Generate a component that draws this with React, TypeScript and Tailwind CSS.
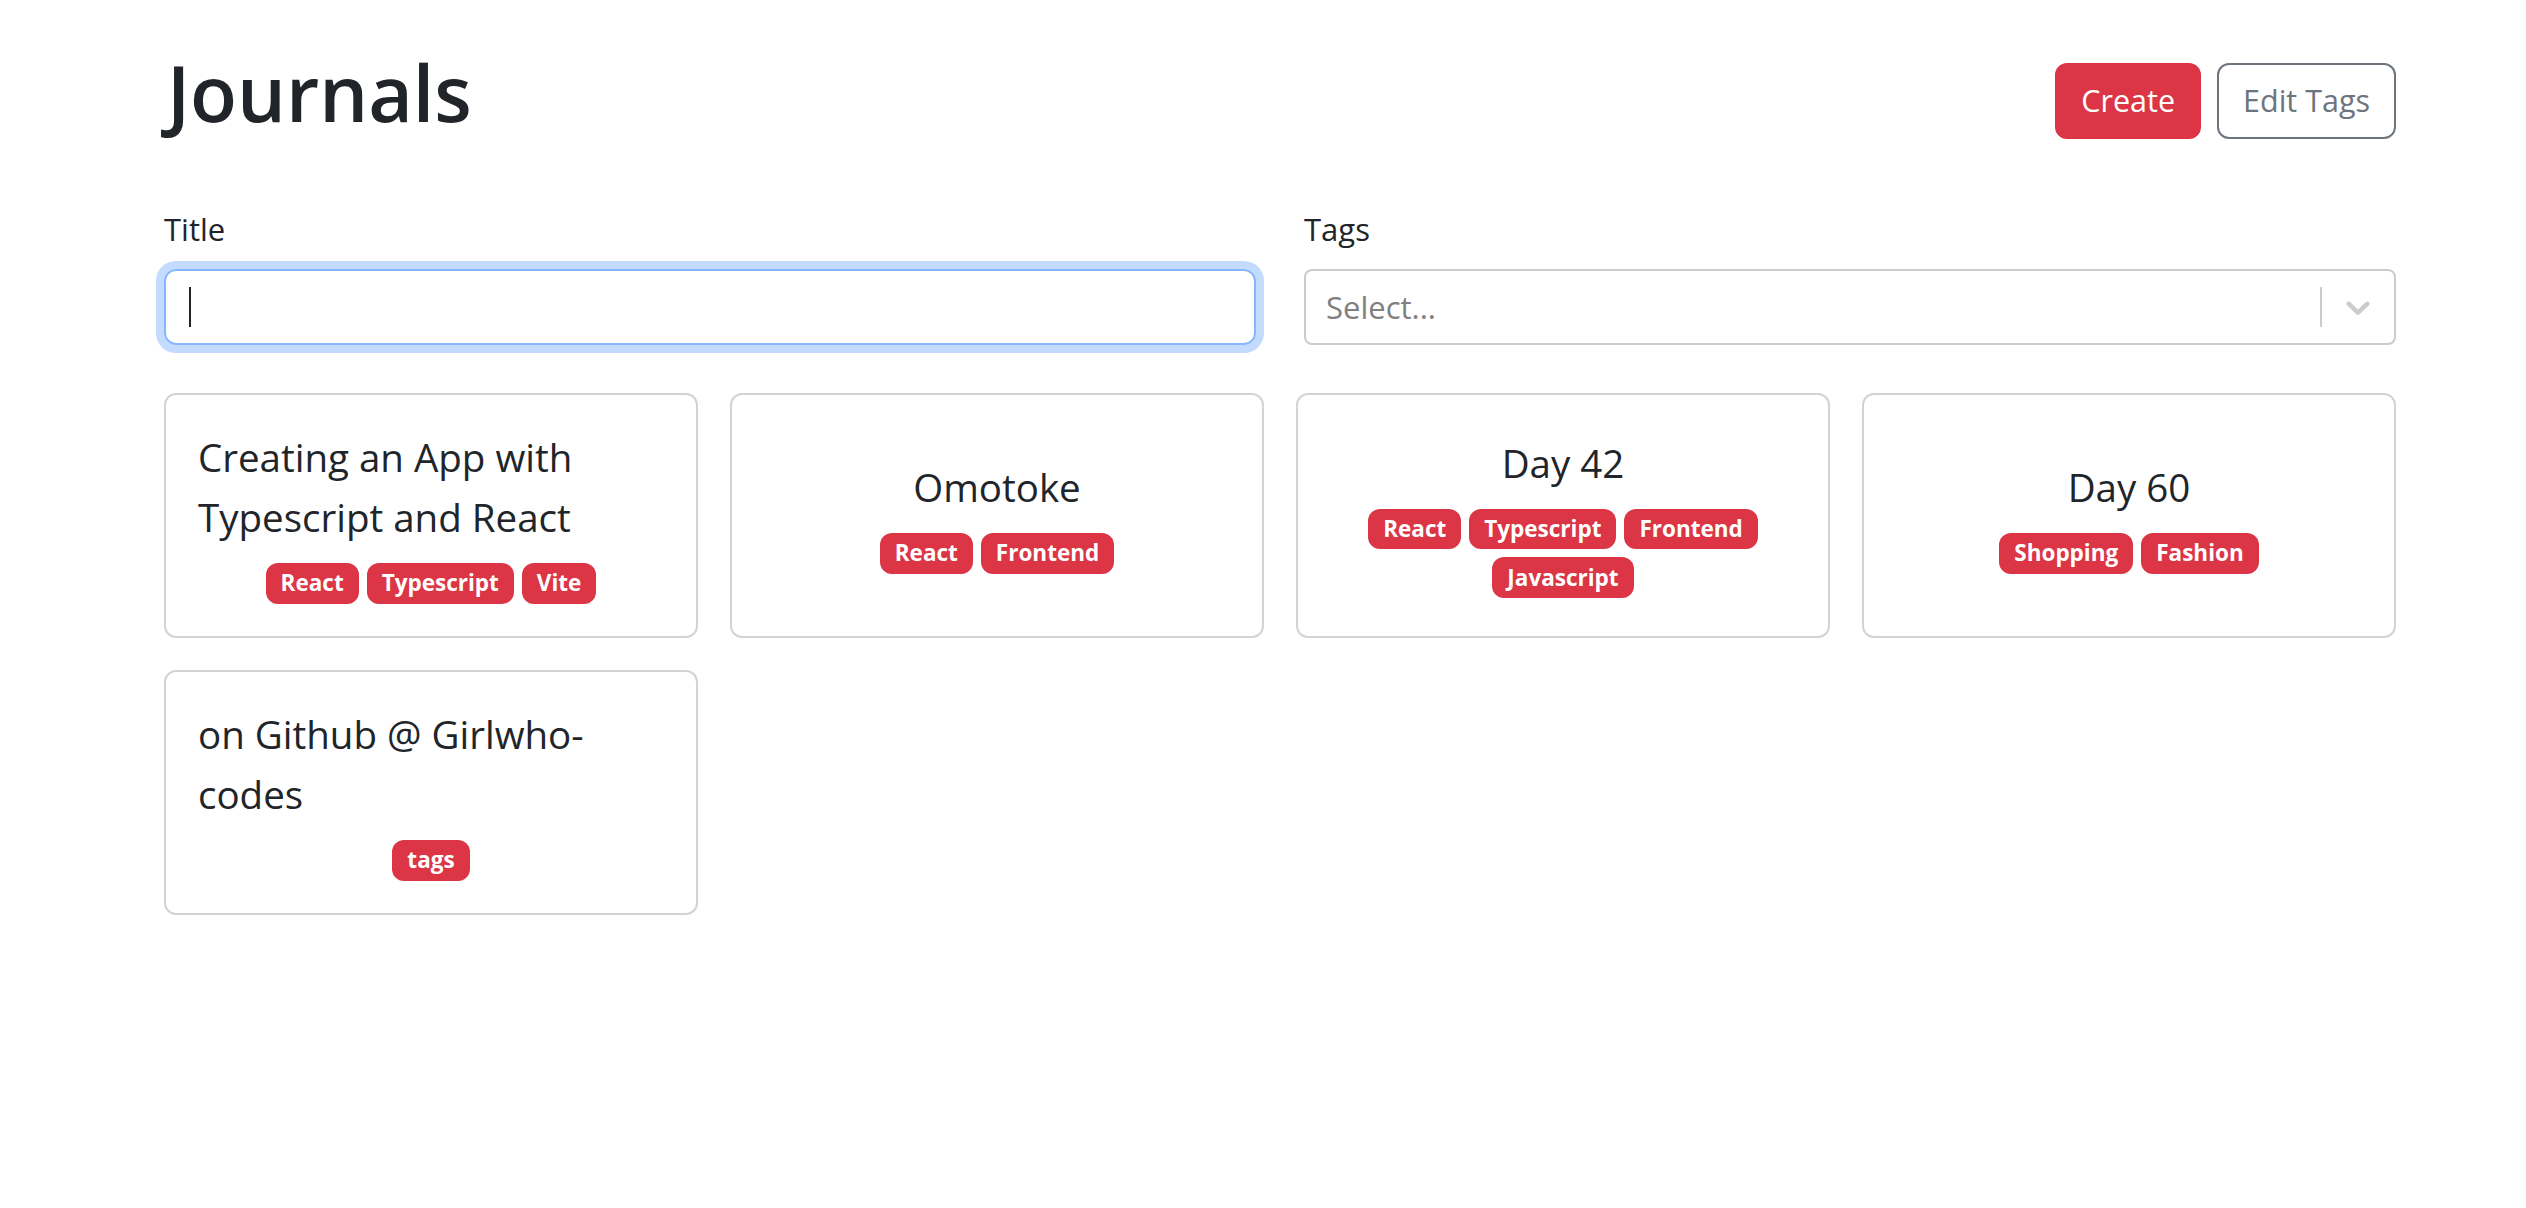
import { useState } from "react";

type Journal = {
    id: string;
    title: string;
    tags: string[];
};

const journals: Journal[] = [
    { id: "1", title: "Creating an App with Typescript and React", tags: ["React", "Typescript", "Vite"] },
    { id: "2", title: "Omotoke", tags: ["React", "Frontend"] },
    { id: "3", title: "Day 42", tags: ["React", "Typescript", "Frontend", "Javascript"] },
    { id: "4", title: "Day 60", tags: ["Shopping", "Fashion"] },
    { id: "5", title: "on Github @ Girlwho-codes", tags: ["tags"] },
];

function JournalCard({ journal }: { journal: Journal }) {
    return (
        <div className="bg-white border-2 border-[#d3d3d3] rounded-[12px] p-[32px] h-full">
            <div className="flex flex-col items-center justify-center gap-[16px] h-full">
                <span className="text-[38.5px] leading-[60px] text-[#212529]">{journal.title}</span>
                <div className="flex flex-wrap justify-center gap-[8px]">
                    {journal.tags.map((tag) => (
                        <span
                            key={tag}
                            className="bg-[#dc3545] text-white font-bold text-[22.5px] leading-none px-[15px] py-[9.2px] rounded-[12px]"
                        >
                            {tag}
                        </span>
                    ))}
                </div>
            </div>
        </div>
    );
}

export default function App() {
    const [title, setTitle] = useState("");

    return (
        <div className="min-h-screen bg-white text-[#212529] font-['Open_Sans',sans-serif]">
            <div className="w-[2232px] ml-[164px] pt-[45px]">
                {/* header */}
                <div className="flex items-center justify-between mb-[48px]">
                    <h1 className="text-[77px] leading-[96px] font-[550] mb-[16px] pl-[3px]">Journals</h1>
                    <div className="flex gap-[16px]">
                        <button className="h-[76px] px-[24px] text-[30.5px] text-white bg-[#dc3545] rounded-[12px] border-2 border-[#dc3545]">
                            Create
                        </button>
                        <button className="h-[76px] px-[24px] text-[30.5px] text-[#6c757d] bg-white rounded-[12px] border-2 border-[#6c757d]">
                            Edit Tags
                        </button>
                    </div>
                </div>

                {/* filters */}
                <div className="grid grid-cols-2 gap-x-[48px] mb-[48px]">
                    <div>
                        <label className="block text-[31px] leading-[48px] mb-[16px]">Title</label>
                        <div className="relative">
                            <input
                                value={title}
                                onChange={(e) => setTitle(e.target.value)}
                                className="w-full h-[76px] px-[24px] text-[32px] border-2 border-[#86b7fe] rounded-[12px] shadow-[0_0_0_8px_rgba(13,110,253,0.25)] outline-none"
                            />
                            <span className="absolute left-[25px] top-[18px] w-[2px] h-[40px] bg-[#212529]" />
                        </div>
                    </div>
                    <div>
                        <label className="block text-[31px] leading-[48px] mb-[16px]">Tags</label>
                        <div className="flex items-center h-[76px] border-2 border-[#cccccc] rounded-[8px] bg-white">
                            <div className="flex-1 px-[20px] text-[31px] text-[#808080]">Select...</div>
                            <span className="w-[2px] h-[40px] bg-[#cccccc]" />
                            <div className="p-[16px]">
                                <svg viewBox="0 0 20 20" className="w-[40px] h-[40px] fill-[#cccccc]">
                                    <path d="M4.516 7.548c0.436-0.446 1.043-0.481 1.576 0l3.908 3.747 3.908-3.747c0.533-0.481 1.141-0.446 1.574 0 0.436 0.445 0.408 1.197 0 1.615-0.406 0.418-4.695 4.502-4.695 4.502-0.217 0.223-0.502 0.335-0.787 0.335s-0.57-0.112-0.789-0.335c0 0-4.287-4.084-4.695-4.502s-0.436-1.17 0-1.615z" />
                                </svg>
                            </div>
                        </div>
                    </div>
                </div>

                {/* journals */}
                <div className="grid grid-cols-4 gap-[32px]">
                    {journals.map((journal) => (
                        <JournalCard key={journal.id} journal={journal} />
                    ))}
                </div>
            </div>
        </div>
    );
}
